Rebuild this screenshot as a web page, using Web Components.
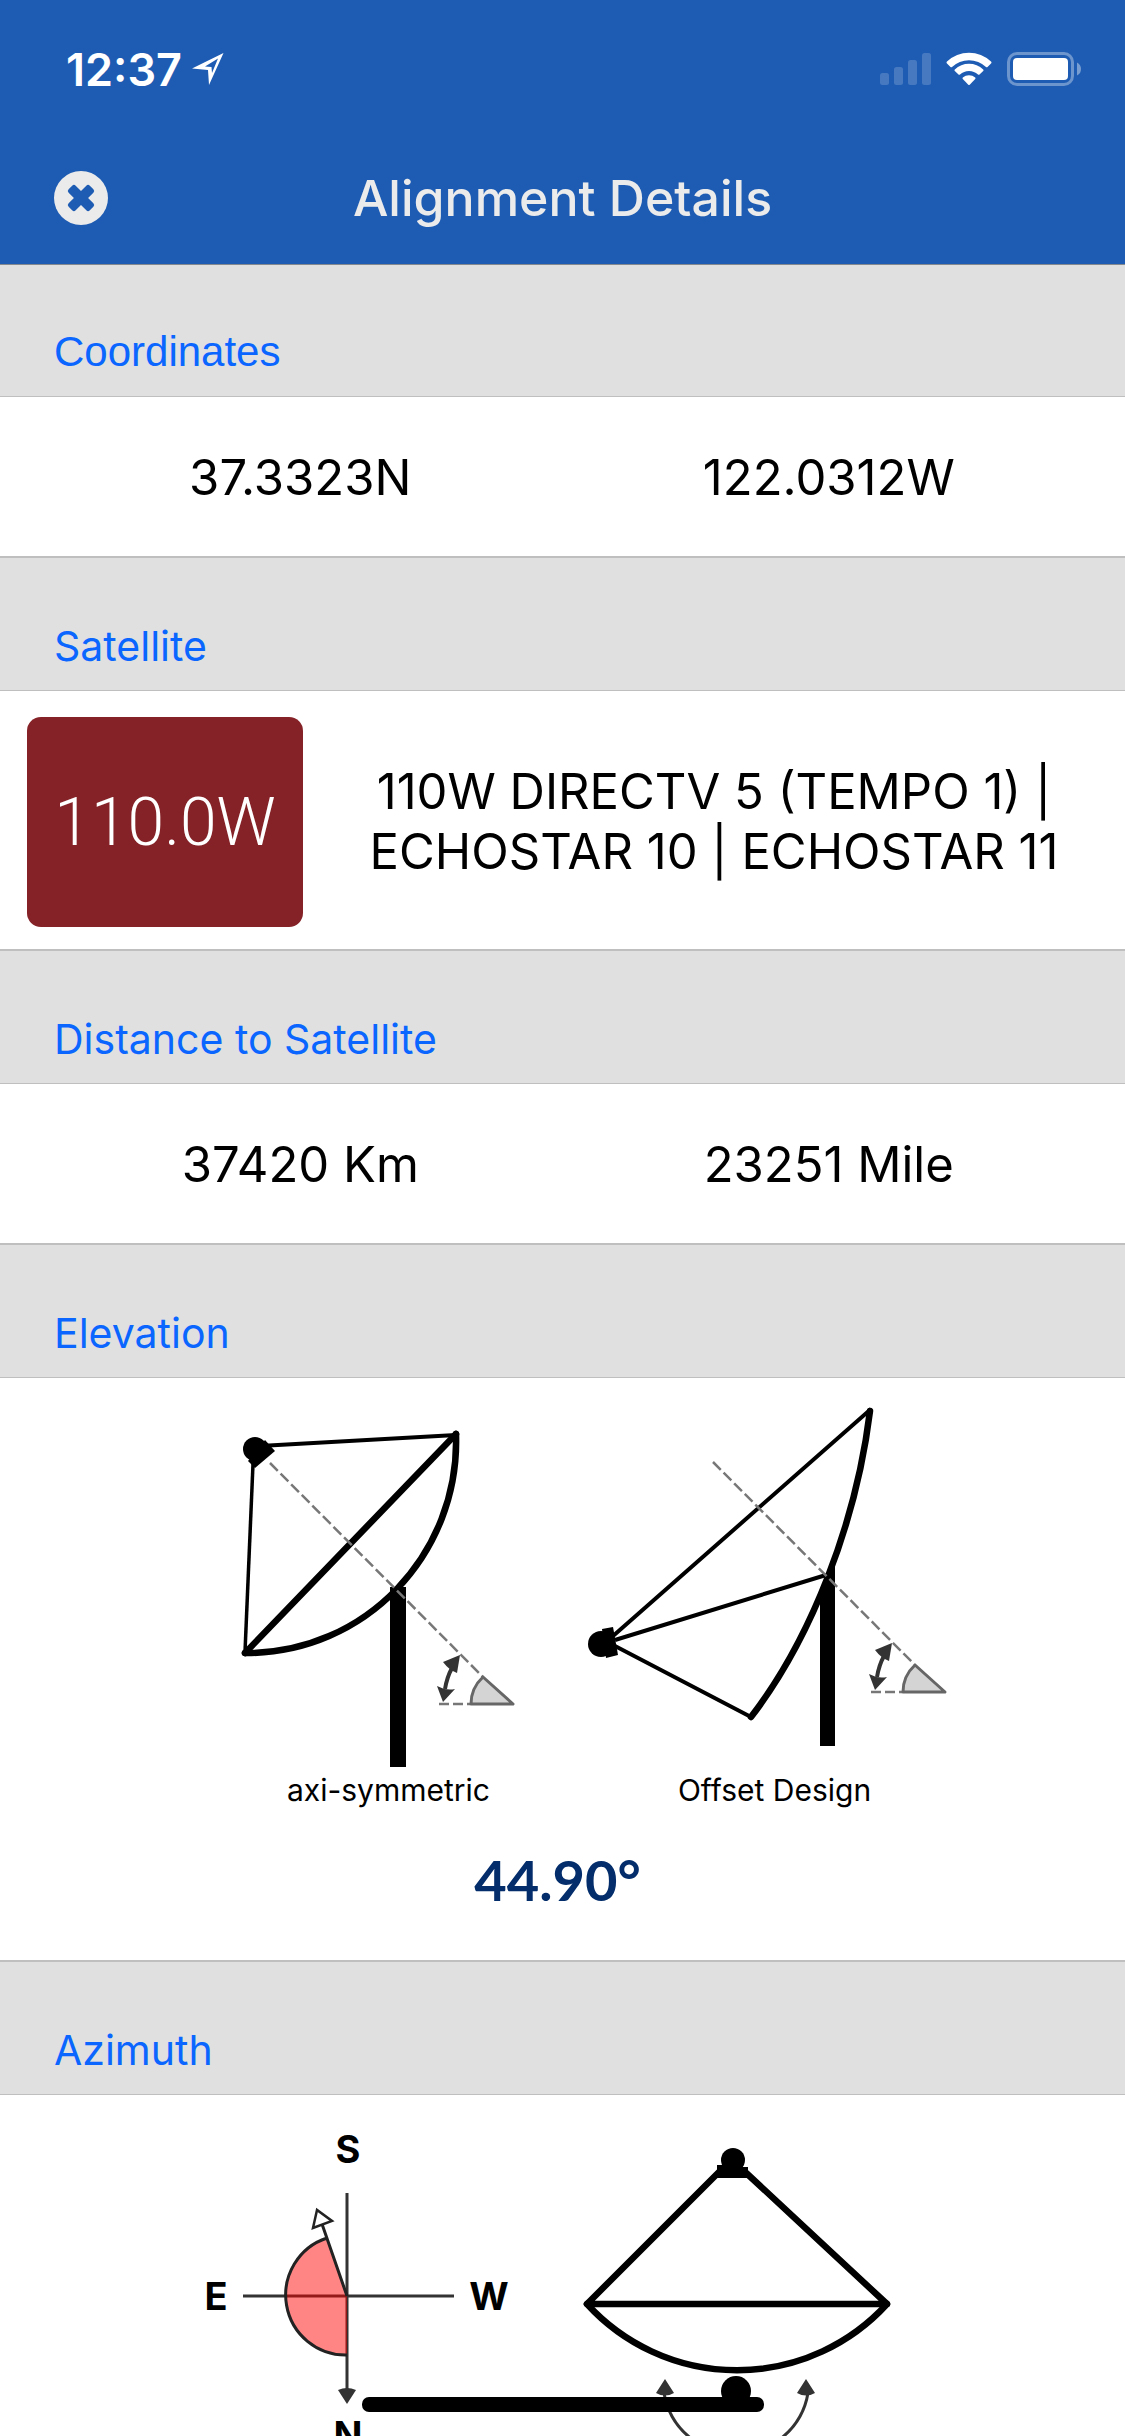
<!DOCTYPE html>
<html lang="en">
<head>
    <meta charset="utf-8">
    <meta name="viewport" content="width=device-width, initial-scale=1">
    <title>Alignment Details</title>
    <style>
        body {
            margin: 0;
            background: #fff;
            color: #000;
            font-family: Inter, "Liberation Sans", sans-serif;
        }
    </style>
</head>
<body>
    <alignment-page></alignment-page>

    <script>
        class statusBar extends HTMLElement {
            constructor() {
                super();
                this.shadow = this.attachShadow({ mode: "open" });
            }

            connectedCallback() {
                this.render();
            }

            render() {
                this.shadow.innerHTML = `
                    <style>
                        :host {
                            display: flex;
                            align-items: center;
                            justify-content: space-between;
                            box-sizing: border-box;
                            height: 132px;
                            padding: 6px 44px 0 66px;
                            color: #fff;
                        }

                        .time {
                            display: flex;
                            align-items: center;
                            gap: 10px;
                            font-size: 45px;
                            font-weight: 600;
                        }

                        .icons {
                            display: flex;
                            align-items: center;
                            gap: 15px;
                        }

                        svg {
                            display: block;
                        }
                    </style>

                    <div class="time">
                        <span>${this.getAttribute("time")}</span>
                        <svg width="32" height="32" viewBox="0 0 32 32" aria-hidden="true">
                            <path fill="#fff" fill-rule="evenodd" d="M0 15.500 31.500 0 17 32 16 17ZM13 13.500 19.500 14 20 20 26 5.500Z"/>
                        </svg>
                    </div>
                    <div class="icons">
                        <svg width="51" height="34" viewBox="0 0 51 34" fill="#fff" fill-opacity=".18" aria-hidden="true">
                            <rect x="0" y="21" width="9" height="12" rx="2.500"/>
                            <rect x="14" y="15" width="9" height="18" rx="2.500"/>
                            <rect x="28" y="8" width="9" height="25" rx="2.500"/>
                            <rect x="42" y="1" width="9" height="32" rx="2.500"/>
                        </svg>
                        <svg width="46" height="34" viewBox="0 0 46 34" fill="#fff" aria-hidden="true">
                            <path d="M1 9.500A32 32 0 0 1 45 9.500Q46 10.500 45 11.500L41.500 15Q40.700 15.500 40 15A24.500 24.500 0 0 0 6 15Q5.300 15.500 4.500 15L1 11.500Q0 10.500 1 9.500Z"/>
                            <path d="M8.800 17.500A20.500 20.500 0 0 1 37.200 17.500Q38 18.200 37.200 19L33.500 22.500Q32.800 23 32 22.500A13.300 13.300 0 0 0 14 22.500Q13.200 23 12.500 22.500L8.800 19Q8 18.200 8.800 17.500Z"/>
                            <path d="M16.800 25.500A9.500 9.500 0 0 1 29.200 25.500Q29.900 26.200 29.200 27L23.700 32.700Q23 33.300 22.300 32.700L16.800 27Q16.100 26.200 16.800 25.500Z"/>
                        </svg>
                        <svg width="74" height="34" viewBox="0 0 74 34" fill="#fff" aria-hidden="true">
                            <rect x="1.500" y="1.500" width="64" height="31" rx="8.500" fill="none" stroke="#fff" stroke-width="3" opacity=".35"/>
                            <rect x="6" y="6" width="55" height="22" rx="4"/>
                            <path d="M70 10.500Q74 12.500 74 17T70 23.500Z" opacity=".4"/>
                        </svg>
                    </div>
                `;
            }
        }

        class navBar extends HTMLElement {
            constructor() {
                super();
                this.shadow = this.attachShadow({ mode: "open" });
            }

            connectedCallback() {
                this.render();
            }

            render() {
                this.shadow.innerHTML = `
                    <style>
                        :host {
                            display: grid;
                            grid-template-columns: 54px 1fr 54px;
                            align-items: center;
                            height: 132px;
                            padding: 0 54px;
                            border-bottom: 1px solid #84898f;
                            color: #ebebeb;
                        }

                        button {
                            width: 54px;
                            height: 54px;
                            padding: 0;
                            border: 0;
                            background: none;
                            color: inherit;
                            cursor: pointer;
                        }

                        svg {
                            display: block;
                        }

                        h1 {
                            margin: 0;
                            font-size: 50px;
                            font-weight: 500;
                            line-height: 60px;
                            text-align: center;
                        }
                    </style>

                    <button type="button" aria-label="Close">
                        <svg width="54" height="54" viewBox="0 0 54 54">
                            <circle cx="27" cy="27" r="27" fill="currentColor"/>
                            <g fill="#1e5cb3" transform="rotate(45 27 27)">
                                <rect x="12" y="22" width="30" height="10" rx="2.500"/>
                                <rect x="22" y="12" width="10" height="30" rx="2.500"/>
                            </g>
                        </svg>
                    </button>
                    <h1><slot></slot></h1>
                `;
            }
        }

        class detailSection extends HTMLElement {
            constructor() {
                super();
                this.shadow = this.attachShadow({ mode: "open" });
            }

            get heading() {
                return this.getAttribute("heading");
            }

            connectedCallback() {
                this.render();
            }

            render() {
                this.shadow.innerHTML = `
                    <style>
                        :host {
                            display: block;
                            border-top: 2px solid #bfbfbf;
                        }

                        h2 {
                            display: flex;
                            align-items: flex-end;
                            box-sizing: border-box;
                            height: 133px;
                            margin: 0;
                            padding: 0 54px 19px;
                            border-bottom: 1px solid #bfbfbf;
                            background: #e0e0e0;
                            color: #0a66ff;
                            font-size: 41px;
                            font-weight: 400;
                            line-height: 50px;
                        }

                        /* the first heading sits right under the nav bar and its border */
                        :host(:first-of-type) {
                            border-top: 0;
                        }

                        :host(:first-of-type) h2 {
                            height: 132px;
                            font-family: "Liberation Sans", sans-serif;
                            font-size: 42px;
                        }
                    </style>

                    <h2>${this.heading}</h2>
                    <slot></slot>
                `;
            }
        }

        class valuePair extends HTMLElement {
            constructor() {
                super();
                this.shadow = this.attachShadow({ mode: "open" });
            }

            connectedCallback() {
                this.render();
            }

            render() {
                this.shadow.innerHTML = `
                    <style>
                        :host {
                            display: grid;
                            grid-template-columns: 1fr 1fr;
                            align-items: center;
                            box-sizing: border-box;
                            height: 159px;
                            padding: 2px 32px 0 36px;
                            font-size: 49px;
                            line-height: 60px;
                            text-align: center;
                        }
                    </style>

                    <span>${this.getAttribute("first")}</span>
                    <span>${this.getAttribute("second")}</span>
                `;
            }
        }

        class satelliteRow extends HTMLElement {
            constructor() {
                super();
                this.shadow = this.attachShadow({ mode: "open" });
            }

            connectedCallback() {
                this.render();
            }

            render() {
                this.shadow.innerHTML = `
                    <style>
                        :host {
                            display: flex;
                            align-items: center;
                            padding: 26px 0 22px 27px;
                        }

                        .badge {
                            flex: none;
                            display: flex;
                            align-items: center;
                            justify-content: center;
                            width: 276px;
                            height: 210px;
                            border-radius: 14px;
                            background: #852227;
                            color: #fff;
                            font-family: Roboto, sans-serif;
                            font-size: 66px;
                            font-weight: 300;
                        }

                        .name {
                            flex: 1;
                            padding: 0 40px;
                            font-size: 49px;
                            line-height: 60px;
                            text-align: center;
                        }
                    </style>

                    <div class="badge">${this.getAttribute("position")}</div>
                    <div class="name"><slot></slot></div>
                `;
            }
        }

        // wedge and double arrow that mark the elevation angle
        const angleMark = `
            <path d="M239 310h31" stroke="#777" stroke-width="2.500" stroke-dasharray="10 4"/>
            <path d="M283 283 313 310H271Q271 294 283 283Z" fill="#d4d4d4" stroke="#666" stroke-width="3" stroke-linejoin="round"/>
            <path d="M252 274Q247 283 245 295" fill="none" stroke="#333" stroke-width="4"/>
            <path d="M260 261 243 268Q249 276 257 279Z" fill="#333"/>
            <path d="M237 292Q246 297 255 295L243 308Z" fill="#333"/>
        `;

        const dishes = {
            axial: `
                <path d="M60 52 256 41" stroke="#000" stroke-width="4"/>
                <path d="M53 70 45 258" stroke="#000" stroke-width="3.500"/>
                <path d="M256 40 45 259" stroke="#000" stroke-width="6.500" stroke-linecap="round"/>
                <path d="M256 40C260 160 165 260 45 259" fill="none" stroke="#000" stroke-width="6.500" stroke-linecap="round"/>
                <rect x="190" y="193" width="16" height="180"/>
                <circle cx="55" cy="55" r="12"/>
                <path d="M48 67 55 74 75 57 65 46Z"/>
                <path d="M70 69 283 283" stroke="#777" stroke-width="2.500" stroke-dasharray="11 4"/>
                ${angleMark}
            `,
            offset: `
                <path d="M285 15 27 242M240 181 29 246M165 323 29 252" stroke="#000" stroke-width="4"/>
                <path d="M284 17C270 130 225 245 165 323" fill="none" stroke="#000" stroke-width="6.500" stroke-linecap="round"/>
                <path d="M245 172H249V352H234V202Z"/>
                <circle cx="15" cy="250" r="13"/>
                <path d="M16 235 27 233 29 244 32 261 20 264Z"/>
                <path d="M127 68 329 271" stroke="#777" stroke-width="2.500" stroke-dasharray="11 4"/>
                <g transform="translate(46 -12)">${angleMark}</g>
            `
        };

        class dishFigure extends HTMLElement {
            constructor() {
                super();
                this.shadow = this.attachShadow({ mode: "open" });
            }

            connectedCallback() {
                this.render();
            }

            render() {
                this.shadow.innerHTML = `
                    <style>
                        :host {
                            display: block;
                        }

                        figure {
                            margin: 0;
                        }

                        svg {
                            display: block;
                        }

                        figcaption {
                            font-size: 30px;
                            line-height: 40px;
                            text-align: center;
                        }
                    </style>

                    <figure>
                        <svg width="378" height="376" viewBox="0 0 378 376" aria-hidden="true">${dishes[this.getAttribute("type")]}</svg>
                        <figcaption><slot></slot></figcaption>
                    </figure>
                `;
            }
        }

        class elevationRow extends HTMLElement {
            constructor() {
                super();
                this.shadow = this.attachShadow({ mode: "open" });
            }

            connectedCallback() {
                this.render();
            }

            render() {
                this.shadow.innerHTML = `
                    <style>
                        :host {
                            display: block;
                            padding: 16px 0 50px;
                        }

                        .figures {
                            display: flex;
                            justify-content: center;
                            gap: 8px;
                            padding-left: 38px;
                        }

                        .angle {
                            margin: 40px 0 0;
                            padding-right: 10px;
                            color: #032d6b;
                            font-family: Lato, sans-serif;
                            font-size: 56px;
                            font-weight: 700;
                            line-height: 60px;
                            text-align: center;
                        }
                    </style>

                    <div class="figures"><slot></slot></div>
                    <p class="angle">${this.getAttribute("angle")}</p>
                `;
            }
        }

        class azimuthRow extends HTMLElement {
            constructor() {
                super();
                this.shadow = this.attachShadow({ mode: "open" });
            }

            connectedCallback() {
                this.render();
            }

            render() {
                this.shadow.innerHTML = `
                    <style>
                        :host {
                            display: flex;
                            justify-content: center;
                        }

                        svg {
                            display: block;
                        }

                        text {
                            font-size: 38px;
                            font-weight: 700;
                            text-anchor: middle;
                        }
                    </style>

                    <svg width="759" height="400" viewBox="0 0 759 400">
                        <!-- compass -->
                        <text x="165" y="68">S</text>
                        <text x="33" y="215">E</text>
                        <text x="306" y="215">W</text>
                        <text x="165" y="354">N</text>
                        <path d="M164 98V294M60 201H271" stroke="#333" stroke-width="3"/>
                        <path d="M155 295Q164 291 173 295L164 309Z" fill="#333"/>
                        <path d="M164 201 144 143A60 60 0 0 0 164 260Z" fill="#f00" fill-opacity=".48"/>
                        <path d="M164 201 139 129M144 143A60 60 0 0 0 164 260" fill="none" stroke="#222" stroke-width="3"/>
                        <path d="M134 115 130 133 149 126Z" fill="#fff" stroke="#222" stroke-width="2.500"/>

                        <!-- dish from above, turning on its mast -->
                        <path d="M538 75 404 209H704L560 75" fill="none" stroke="#000" stroke-width="6.500" stroke-linejoin="round"/>
                        <path d="M404 209A203 203 0 0 0 704 209" fill="none" stroke="#000" stroke-width="6.500" stroke-linecap="round"/>
                        <circle cx="550" cy="65" r="12"/>
                        <path d="M534 70H547V72H565V83H534Z"/>
                        <path d="M481 298A73 73 0 0 0 625 298" fill="none" stroke="#333" stroke-width="3"/>
                        <path d="M482 284 473 298Q482 303 491 298ZM623 284 614 298Q623 303 632 298Z" fill="#333"/>
                        <circle cx="553" cy="296" r="15"/>
                        <rect x="179" y="302" width="402" height="15" rx="7"/>
                    </svg>
                `;
            }
        }

        class alignmentPage extends HTMLElement {
            constructor() {
                super();
                this.shadow = this.attachShadow({ mode: "open" });
            }

            connectedCallback() {
                this.render();
            }

            render() {
                this.shadow.innerHTML = `
                    <style>
                        :host {
                            display: flex;
                            flex-direction: column;
                            height: 100vh;
                        }

                        header {
                            flex: none;
                            background: #1e5cb3;
                        }

                        main {
                            flex: 1;
                            min-height: 0;
                            overflow-y: auto;
                            scrollbar-width: none;
                        }
                    </style>

                    <header>
                        <status-bar time="12:37"></status-bar>
                        <nav-bar>Alignment Details</nav-bar>
                    </header>
                    <main>
                        <detail-section heading="Coordinates">
                            <value-pair first="37.3323N" second="122.0312W"></value-pair>
                        </detail-section>
                        <detail-section heading="Satellite">
                            <satellite-row position="110.0W">110W DIRECTV 5 (TEMPO 1) | ECHOSTAR 10 | ECHOSTAR 11</satellite-row>
                        </detail-section>
                        <detail-section heading="Distance to Satellite">
                            <value-pair first="37420 Km" second="23251 Mile"></value-pair>
                        </detail-section>
                        <detail-section heading="Elevation">
                            <elevation-row angle="44.90°">
                                <dish-figure type="axial">axi-symmetric</dish-figure>
                                <dish-figure type="offset">Offset Design</dish-figure>
                            </elevation-row>
                        </detail-section>
                        <detail-section heading="Azimuth">
                            <azimuth-row></azimuth-row>
                        </detail-section>
                    </main>
                `;
            }
        }

        window.customElements.define("status-bar", statusBar);
        window.customElements.define("nav-bar", navBar);
        window.customElements.define("detail-section", detailSection);
        window.customElements.define("value-pair", valuePair);
        window.customElements.define("satellite-row", satelliteRow);
        window.customElements.define("dish-figure", dishFigure);
        window.customElements.define("elevation-row", elevationRow);
        window.customElements.define("azimuth-row", azimuthRow);
        window.customElements.define("alignment-page", alignmentPage);
    </script>
</body>
</html>
